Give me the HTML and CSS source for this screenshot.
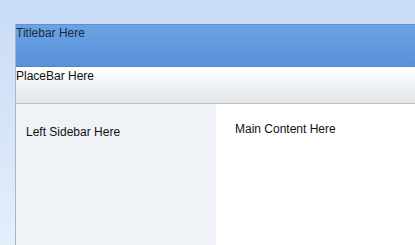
FILE: index.html
```html
<!DOCTYPE html>
<html lang="en">
<head>
    <meta charset="UTF-8">
    <meta name="viewport" content="width=device-width, initial-scale=1.0">
    <title>Layout</title>
    <link rel="stylesheet" href="styles.css">
</head>
<body>
    <div class="page">
        <div class="titlebar">Titlebar Here</div>
        <div class="placebar">PlaceBar Here</div>
        <div class="content">
            <div class="sidebar">Left Sidebar Here</div>
            <div class="main">Main Content Here</div>
        </div>
    </div>
</body>
</html>
```

FILE: styles.css
```css
html {
    height: 100%;
}

body {
    margin: 0;
    min-height: 100%;
    padding: 24px 0 0 15px;
    box-sizing: border-box;
    font-family: 'Liberation Sans', Arial, sans-serif;
    font-size: 12px;
    line-height: 15px;
    color: #111;
    background: linear-gradient(to bottom, #c8dbf7 0%, #e4eefb 100%);
}

.page {
    display: flex;
    flex-direction: column;
    border-left: 1px solid #b0b4b8;
    height: 221px;
}

.titlebar {
    height: 40px;
    padding-top: 1px;
    background: linear-gradient(to bottom, #6ba2e3, #5992db);
    border-top: 1px solid #5f8fcc;
    border-bottom: 1px solid #5a86bf;
    color: #1a2a40;
}

.placebar {
    height: 34px;
    padding-top: 2px;
    background: linear-gradient(to bottom, #ffffff, #e1e5e8);
    border-bottom: 1px solid #bfc3c6;
}

.content {
    flex: 1;
    display: flex;
}

.sidebar {
    width: 190px;
    padding: 21px 0 0 10px;
    background-color: #eff3f8;
}

.main {
    flex: 1;
    padding: 18px 0 0 19px;
    background-color: #ffffff;
}
```
